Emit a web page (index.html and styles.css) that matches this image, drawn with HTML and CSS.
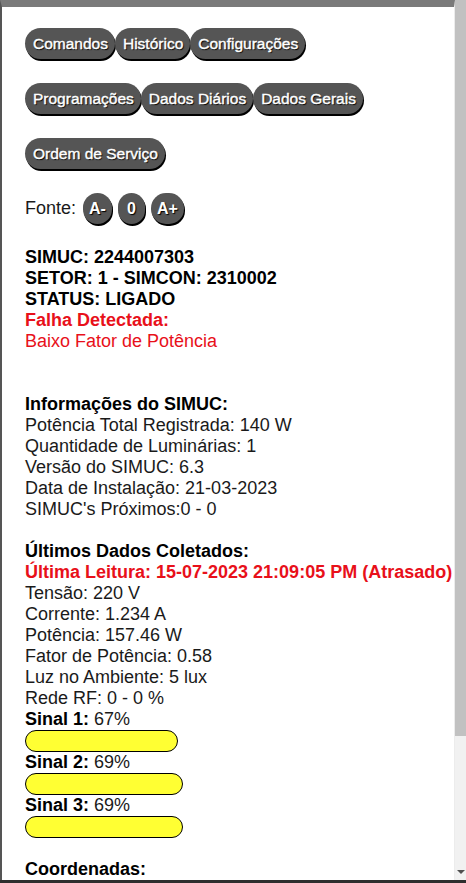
FILE: index.html
```html
<!DOCTYPE html>
<html lang="pt">
<head>
<meta charset="utf-8">
<title>SIMUC</title>
<link rel="stylesheet" href="styles.css">
</head>
<body>
<div class="window">
  <div class="frame">
    <div class="content">
      <div class="btn-row">
        <span class="btn">Comandos</span><span class="btn">Histórico</span><span class="btn">Configurações</span>
      </div>
      <div class="btn-row">
        <span class="btn">Programações</span><span class="btn">Dados Diários</span><span class="btn">Dados Gerais</span>
      </div>
      <div class="btn-row">
        <span class="btn">Ordem de Serviço</span>
      </div>
      <div class="font-row">
        <span class="font-label">Fonte:</span>
        <span class="btn btn-small">A-</span>
        <span class="btn btn-small">0</span>
        <span class="btn btn-small">A+</span>
      </div>
      <div class="info">
        <b>SIMUC: 2244007303</b><br>
        <b>SETOR: 1 - SIMCON: 2310002</b><br>
        <b>STATUS: LIGADO</b><br>
        <b class="red">Falha Detectada:</b><br>
        <span class="red">Baixo Fator de Potência</span><br>
        <br><br>
        <b>Informações do SIMUC:</b><br>
        Potência Total Registrada: 140 W<br>
        Quantidade de Luminárias: 1<br>
        Versão do SIMUC: 6.3<br>
        Data de Instalação: 21-03-2023<br>
        SIMUC's Próximos:0 - 0<br>
        <br>
        <b>Últimos Dados Coletados:</b><br>
        <b class="red">Última Leitura: 15-07-2023 21:09:05 PM (Atrasado)</b><br>
        Tensão: 220 V<br>
        Corrente: 1.234 A<br>
        Potência: 157.46 W<br>
        Fator de Potência: 0.58<br>
        Luz no Ambiente: 5 lux<br>
        Rede RF: 0 - 0 %<br>
        <b>Sinal 1:</b> 67%
        <div class="bar" style="width: 153px"></div>
        <b>Sinal 2:</b> 69%
        <div class="bar" style="width: 158px"></div>
        <b>Sinal 3:</b> 69%
        <div class="bar" style="width: 158px"></div>
        <br>
        <b>Coordenadas:</b>
      </div>
    </div>
  </div>
  <div class="scrollbar">
    <div class="thumb"></div>
    <div class="track"></div>
    <div class="arrow"></div>
  </div>
</div>
</body>
</html>
```

FILE: styles.css
```css
html, body {
  margin: 0;
  padding: 0;
  background: #fff;
}

.window {
  height: 883px;
  box-sizing: border-box;
  border-bottom: 3px solid #2e2e2e;
  display: flex;
  overflow: hidden;
}

.frame {
  flex: 1;
  box-sizing: border-box;
  border-top: 7px solid #7a7a7a;
  border-left: 2px solid #555;
  border-right: 1px solid #ececec;
  background: #fff;
  overflow: hidden;
}

.content {
  padding: 21px 0 0 23px;
  font-family: "Liberation Sans", Arial, sans-serif;
  font-size: 18px;
  line-height: 21px;
  color: #1a1a1a;
}

.btn-row {
  display: flex;
  margin-bottom: 24px;
}

.btn {
  display: inline-block;
  background: #555;
  color: #fff;
  font-family: "Liberation Sans", Arial, sans-serif;
  font-size: 15.5px;
  line-height: 18px;
  padding: 7px 7px 6px 8px;
  border-radius: 16px;
  text-shadow: 1px 1px 1px #000;
  -webkit-text-stroke: 0.4px #fff;
  box-shadow: 1px 2px 0 #000;
}

.font-row {
  display: flex;
  align-items: center;
  margin-bottom: 23px;
}

.font-label {
  margin-right: 4px;
}

.btn-small {
  padding: 7px 6px 6px;
  min-width: 15px;
  text-align: center;
  border-radius: 15px;
  margin: 0 3px;
  font-size: 16px;
  font-weight: bold;
  -webkit-text-stroke: 0;
}

.info b {
  color: #000;
}

.info .red,
.red {
  color: #e8101a;
}

.bar {
  height: 22px;
  box-sizing: border-box;
  border: 1px solid #000;
  border-radius: 11px;
  background: #ffff33;
}

.scrollbar {
  width: 11px;
  flex: none;
  display: flex;
  flex-direction: column;
  background: #f1f1f1;
}

.thumb {
  height: 736px;
  background: #c1c1c1;
}

.track {
  flex: 1;
}

.arrow {
  height: 12px;
  position: relative;
}

.arrow::after {
  content: "";
  position: absolute;
  left: 2px;
  top: 2px;
  border-left: 4px solid transparent;
  border-right: 4px solid transparent;
  border-top: 4px solid #505050;
}
```
